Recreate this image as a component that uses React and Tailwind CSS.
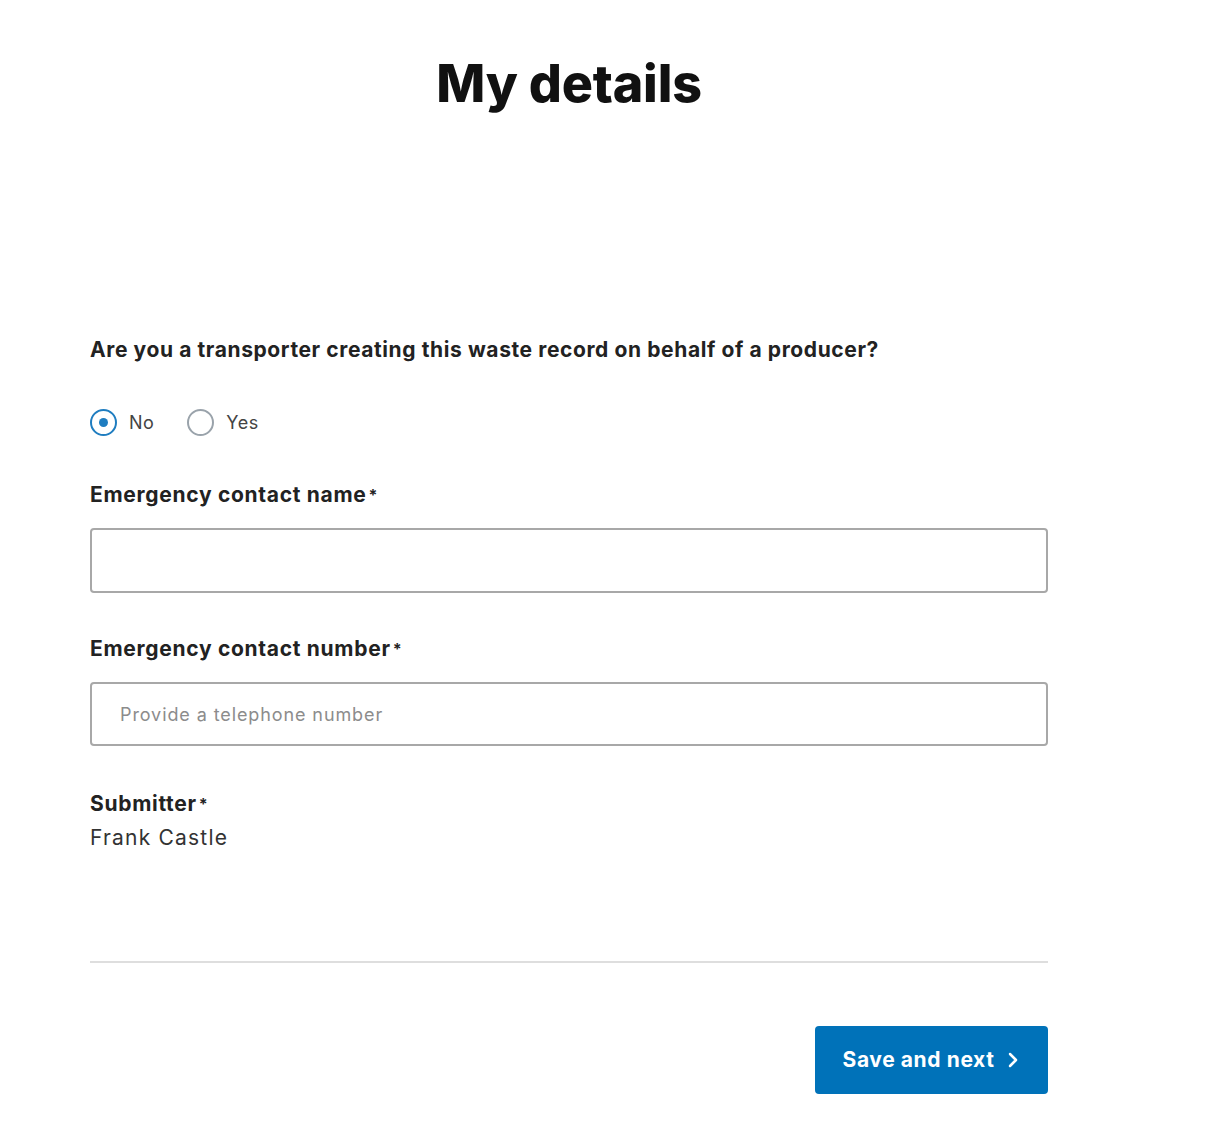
export default function App() {
  const font = { fontFamily: "Inter, 'Open Sans', sans-serif" };
  return (
    <div className="min-h-[1122px] bg-white text-[#1a1a1a]" style={font}>
      <div className="ml-[90px] w-[958px] flex flex-col">
        <h1 className="mt-[55px] text-center text-[52px] leading-[58px] font-extrabold text-[#111] tracking-[-0.2px]">My details</h1>
        <p className="mt-[223px] text-[21px] leading-[28px] font-bold text-[#222] tracking-[0.6px]">
          Are you a transporter creating this waste record on behalf of a producer?
        </p>
        <div className="mt-[44px] flex items-center h-[28px]">
          <span className="w-[27px] h-[27px] rounded-full border-2 border-[#1f7dc0] flex items-center justify-center">
            <span className="w-[9px] h-[9px] rounded-full bg-[#1f7dc0]" />
          </span>
          <span className="ml-[12px] text-[18px] text-[#444] tracking-[0.5px]">No</span>
          <span className="ml-[33px] w-[27px] h-[27px] rounded-full border-2 border-[#9aa3ab]" />
          <span className="ml-[12px] text-[18px] text-[#444] tracking-[0.5px]">Yes</span>
        </div>
        <label className="mt-[45px] text-[21px] leading-[28px] font-bold text-[#222] tracking-[0.7px]">
          Emergency contact name<span className="text-[16px] align-top ml-[2px]">*</span>
        </label>
        <div className="mt-[19px] h-[65px] rounded-[4px] border-2 border-[#a8a8a8]" />
        <label className="mt-[42px] text-[21px] leading-[28px] font-bold text-[#222] tracking-[0.7px]">
          Emergency contact number<span className="text-[16px] align-top ml-[2px]">*</span>
        </label>
        <div className="mt-[19px] h-[64px] rounded-[4px] border-2 border-[#a8a8a8] flex items-center pl-[28px] text-[18px] text-[#8c8c8c] tracking-[0.9px]">
          Provide a telephone number
        </div>
        <label className="mt-[44px] text-[21px] leading-[28px] font-bold text-[#222] tracking-[0.7px]">
          Submitter<span className="text-[16px] align-top ml-[2px]">*</span>
        </label>
        <div className="mt-[6px] text-[21px] leading-[28px] text-[#333] tracking-[1.2px]">Frank Castle</div>
        <div className="mt-[109px] h-[2px] bg-[#dedede]" />
        <div className="mt-[63px] flex justify-end">
          <button className="w-[233px] h-[68px] rounded-[4px] bg-[#0072b9] text-white text-[21px] font-bold flex items-center justify-center gap-[12px] tracking-[0.6px]">
            Save and next
            <svg width="14" height="18" viewBox="0 0 14 18" fill="none" stroke="white" strokeWidth="2.5" strokeLinecap="round" strokeLinejoin="round">
              <path d="M4 3l6 6-6 6" />
            </svg>
          </button>
        </div>
      </div>
    </div>
  );
}
